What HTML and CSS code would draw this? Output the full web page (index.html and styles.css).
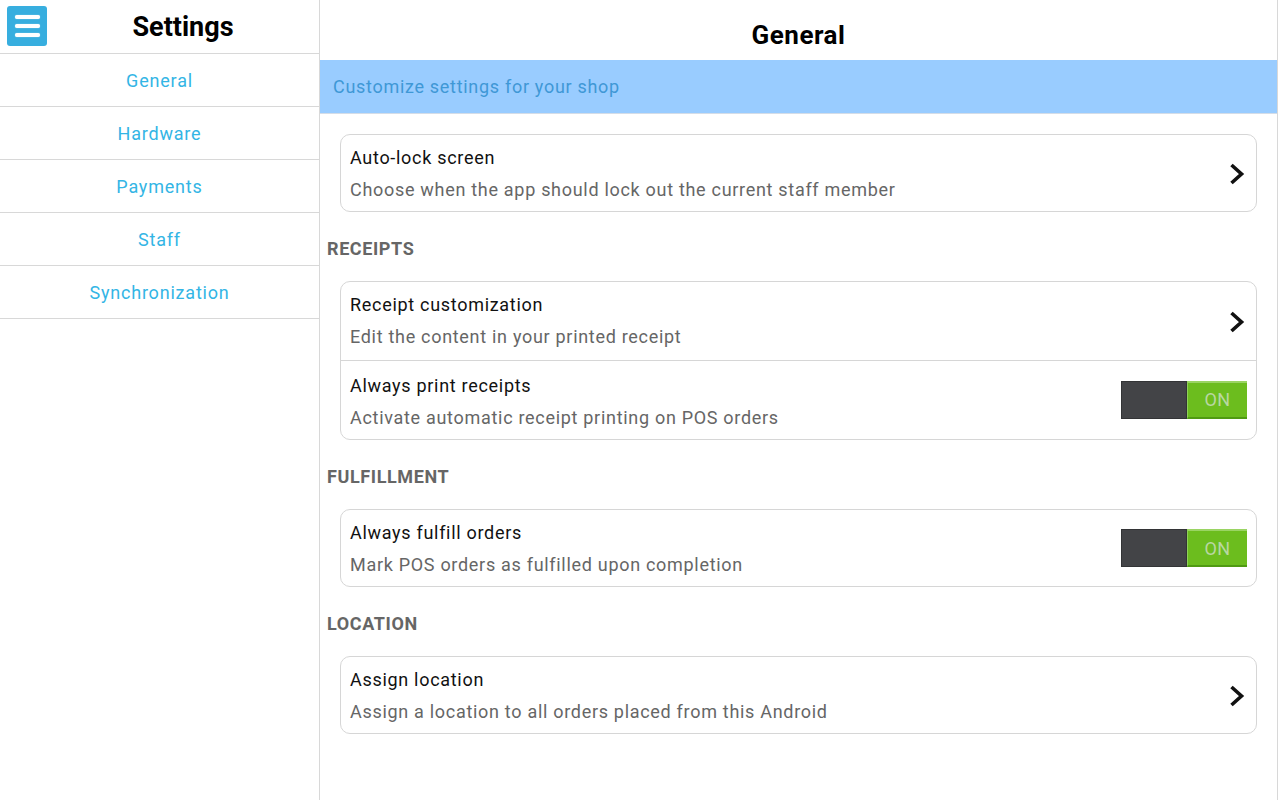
FILE: index.html
```html
<!DOCTYPE html>
<html>
<head>
<meta charset="utf-8">
<link rel="stylesheet" href="styles.css">
</head>
<body>
<div class="app">
  <aside class="sidebar">
    <div class="side-header">
      <div class="menu-btn"><span></span><span></span><span></span></div>
      <div class="side-title">Settings</div>
    </div>
    <nav class="side-nav">
      <div class="nav-item">General</div>
      <div class="nav-item">Hardware</div>
      <div class="nav-item">Payments</div>
      <div class="nav-item">Staff</div>
      <div class="nav-item">Synchronization</div>
    </nav>
  </aside>
  <main class="main">
    <header class="main-header">General</header>
    <div class="banner">Customize settings for your shop</div>
    <div class="content">
      <div class="card">
        <div class="row">
          <div class="row-text">
            <div class="row-title">Auto-lock screen</div>
            <div class="row-sub">Choose when the app should lock out the current staff member</div>
          </div>
          <svg class="chev" width="18" height="24" viewBox="0 0 18 24"><path d="M3.5 3 L13.5 12 L3.5 21" fill="none" stroke="#111" stroke-width="3.6" stroke-linejoin="miter"/></svg>
        </div>
      </div>
      <div class="section">RECEIPTS</div>
      <div class="card">
        <div class="row row-tall">
          <div class="row-text">
            <div class="row-title">Receipt customization</div>
            <div class="row-sub">Edit the content in your printed receipt</div>
          </div>
          <svg class="chev" width="18" height="24" viewBox="0 0 18 24"><path d="M3.5 3 L13.5 12 L3.5 21" fill="none" stroke="#111" stroke-width="3.6" stroke-linejoin="miter"/></svg>
        </div>
        <div class="row row-tall row-low">
          <div class="row-text">
            <div class="row-title">Always print receipts</div>
            <div class="row-sub">Activate automatic receipt printing on POS orders</div>
          </div>
          <div class="toggle toggle-up"><div class="toggle-off"></div><div class="toggle-on">ON</div></div>
        </div>
      </div>
      <div class="section">FULFILLMENT</div>
      <div class="card">
        <div class="row">
          <div class="row-text">
            <div class="row-title">Always fulfill orders</div>
            <div class="row-sub">Mark POS orders as fulfilled upon completion</div>
          </div>
          <div class="toggle"><div class="toggle-off"></div><div class="toggle-on">ON</div></div>
        </div>
      </div>
      <div class="section">LOCATION</div>
      <div class="card">
        <div class="row">
          <div class="row-text">
            <div class="row-title">Assign location</div>
            <div class="row-sub">Assign a location to all orders placed from this Android</div>
          </div>
          <svg class="chev" width="18" height="24" viewBox="0 0 18 24"><path d="M3.5 3 L13.5 12 L3.5 21" fill="none" stroke="#111" stroke-width="3.6" stroke-linejoin="miter"/></svg>
        </div>
      </div>
    </div>
  </main>
</div>
</body>
</html>
```

FILE: styles.css
```css
* { box-sizing: border-box; }
html, body {
  margin: 0;
  padding: 0;
  background: #ffffff;
  font-family: Roboto, "Noto Sans", "Liberation Sans", sans-serif;
}
.app {
  display: flex;
  width: 1280px;
  height: 800px;
}
.sidebar {
  width: 320px;
  flex: none;
  border-right: 1px solid #d8d8d8;
  display: flex;
  flex-direction: column;
}
.side-header {
  height: 54px;
  border-bottom: 1px solid #d8d8d8;
  display: flex;
  align-items: flex-start;
}
.menu-btn {
  width: 40px;
  height: 40px;
  margin: 6px 0 0 7px;
  background: #37aedf;
  border-radius: 3px;
  display: flex;
  flex-direction: column;
  align-items: center;
  justify-content: center;
  gap: 5px;
  flex: none;
}
.menu-btn span {
  display: block;
  width: 25px;
  height: 4px;
  border-radius: 2px;
  background: #ffffff;
  box-shadow: 0 0 1px rgba(255,255,255,0.8);
}
.side-title {
  flex: 1;
  text-align: center;
  font-size: 27px;
  font-weight: 700;
  color: #000;
  line-height: 54px;
}
.nav-item {
  height: 53px;
  border-bottom: 1px solid #d8d8d8;
  display: flex;
  align-items: center;
  justify-content: center;
  font-size: 18px;
  letter-spacing: 0.8px;
  color: #33b5e5;
}
.main {
  width: 958px;
  flex: none;
  border-right: 1px solid #d8d8d8;
  display: flex;
  flex-direction: column;
}
.main-header {
  height: 60px;
  display: flex;
  align-items: center;
  justify-content: center;
  font-size: 26px;
  font-weight: 700;
  letter-spacing: 0.5px;
  color: #000;
  padding-top: 10px;
}
.banner {
  height: 54px;
  background: #99ccff;
  border-bottom: 1px solid #d4dde8;
  display: flex;
  align-items: center;
  padding-left: 13px;
  font-size: 18px;
  letter-spacing: 0.7px;
  color: #3f98d6;
}
.content {
  padding: 20px 20px 0 20px;
  display: flex;
  flex-direction: column;
}
.card {
  border: 1px solid #d6d6d6;
  border-radius: 10px;
}
.row {
  display: flex;
  align-items: center;
  padding: 7px 9px 5px 9px;
  min-height: 76px;
}
.row-tall {
  min-height: 78px;
}
.row-low {
  padding-top: 9px;
}
.row + .row {
  border-top: 1px solid #d6d6d6;
}
.row-text {
  flex: 1;
  align-self: flex-start;
}
.row-title {
  font-size: 18px;
  line-height: 32px;
  letter-spacing: 0.7px;
  color: #111;
}
.row-sub {
  font-size: 18px;
  line-height: 32px;
  letter-spacing: 0.7px;
  color: #666;
}
.chev {
  flex: none;
  margin-right: 1px;
}
.section {
  margin: 22px 0 17px -13px;
  line-height: 30px;
  font-size: 18px;
  font-weight: 700;
  letter-spacing: 0.6px;
  color: #666;
}
.toggle {
  display: flex;
  width: 126px;
  height: 38px;
  flex: none;
  margin-top: -2px;
}
.toggle-up {
  margin-top: -5px;
}
.toggle-off {
  width: 66px;
  background: #434447;
  border: 1px solid #333436;
}
.toggle-on {
  width: 60px;
  background: #6cbd1e;
  border-top: 2px solid #9ad463;
  border-bottom: 2px solid #4f9a12;
  border-left: 1px solid #8fd05a;
  color: #b9d7a2;
  font-size: 18px;
  letter-spacing: 0.5px;
  display: flex;
  align-items: center;
  justify-content: center;
}
```
